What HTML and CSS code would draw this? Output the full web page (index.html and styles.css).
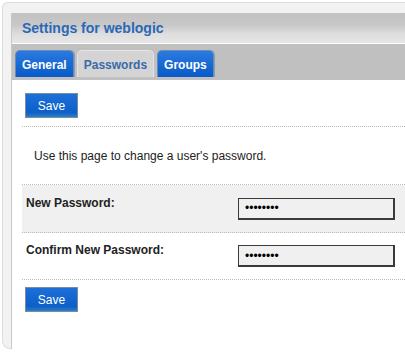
FILE: index.html
```html
<!DOCTYPE html>
<html lang="en">
<head>
  <meta charset="UTF-8">
  <title>Settings for weblogic</title>
  <link rel="stylesheet" href="styles.css">
</head>
<body>
  <div class="frame">
    <div class="panel">
      <div class="title-bar">Settings for weblogic</div>
      <div class="tab-bar">
        <span class="tab">General</span>
        <span class="tab active">Passwords</span>
        <span class="tab">Groups</span>
      </div>
      <div class="content">
        <div class="button-row">
          <button class="save">Save</button>
        </div>
        <p class="intro">Use this page to change a user's password.</p>
        <div class="field odd">
          <label for="pw">New Password:</label>
          <input type="password" id="pw" value="xxxxxxxx">
        </div>
        <div class="field">
          <label for="pw2">Confirm New Password:</label>
          <input type="password" id="pw2" value="xxxxxxxx">
        </div>
        <div class="button-row last">
          <button class="save">Save</button>
        </div>
      </div>
      <div class="footer-bar"></div>
    </div>
  </div>
</body>
</html>
```

FILE: styles.css
```css
body {
  margin: 0;
  padding: 0;
  background: #fff;
  font-family: 'Liberation Sans', Arial, sans-serif;
  font-size: 12px;
  color: #222;
  overflow: hidden;
}
.frame {
  margin: 2px 0 0 2px;
  height: 347px;
  box-sizing: border-box;
  padding: 10px 0 0 8px;
  background: #f2f2f2;
  border: 1px solid #dcdcdc;
  border-right: none;
  border-radius: 6px 0 0 8px;
}
.panel {
  border-left: 1px solid #c8c8c8;
  background: #fff;
}
/* タイトル部分 */
.title-bar {
  height: 30px;
  line-height: 30px;
  padding-left: 10px;
  font-size: 14px;
  font-weight: bold;
  color: #2a68b5;
  background: linear-gradient(#c2c2c2, #c8c8c8 40%, #dedede 70%, #e6e6e6);
  border-bottom: 1px solid #fff;
}
.tab-bar {
  height: 36px;
  background: #c0c0c0;
  display: flex;
  align-items: flex-end;
  gap: 3px;
  padding-left: 3px;
}
.tab {
  height: 26px;
  line-height: 28px;
  padding: 0 6px;
  margin-bottom: 3px;
  background: linear-gradient(#2a7ae0, #0a5ac8);
  color: #fff;
  font-weight: bold;
  font-size: 12px;
  border-radius: 5px 5px 0 0;
  border: 1px solid #6a8ab8;
  border-bottom: none;
  box-shadow: 1px 0 0 #8a9ab0;
}
.tab.active {
  background: #d4d4d4;
  color: #3a6aa8;
  border-color: #e4e4e4;
  box-shadow: none;
  padding: 0 6px;
}
.content {
  padding: 13px 0 10px 10px;
  height: 247px;
}
.button-row {
  padding: 0 0 8px 3px;
  border-bottom: 1px dotted #bbb;
}
.button-row.last {
  border-bottom: none;
  padding-top: 7px;
}
.save {
  width: 53px;
  height: 25px;
  padding: 0;
  font-family: 'Liberation Sans', Arial, sans-serif;
  font-size: 12px;
  color: #fff;
  background: linear-gradient(#1e6fd8, #0d60c8 80%, #2a80c8);
  border: 1px solid #7a8c9e;
  cursor: pointer;
}
.intro {
  margin: 0;
  padding: 22px 0 21px 12px;
  border-bottom: 1px dotted #bbb;
}
.field {
  display: flex;
  align-items: center;
  height: 46px;
  padding-left: 4px;
  border-bottom: 1px dotted #bbb;
}
.field.odd {
  background: #f0f0f0;
  height: 47px;
}
.field label {
  width: 212px;
  font-weight: bold;
  margin-top: -12px;
}
.field input {
  width: 157px;
  height: 22px;
  box-sizing: border-box;
  padding: 0 6px;
  border: 2px solid #3a3a3a;
  border-width: 1px 2px 2px 1px;
  background: #f0f0f0;
  font-size: 12px;
  letter-spacing: 0;
}
.footer-bar {
  height: 10px;
  background: #eee;
  border-top: 1px solid #d0d0d0;
  border-bottom: 1px solid #d8d8d8;
}
```
